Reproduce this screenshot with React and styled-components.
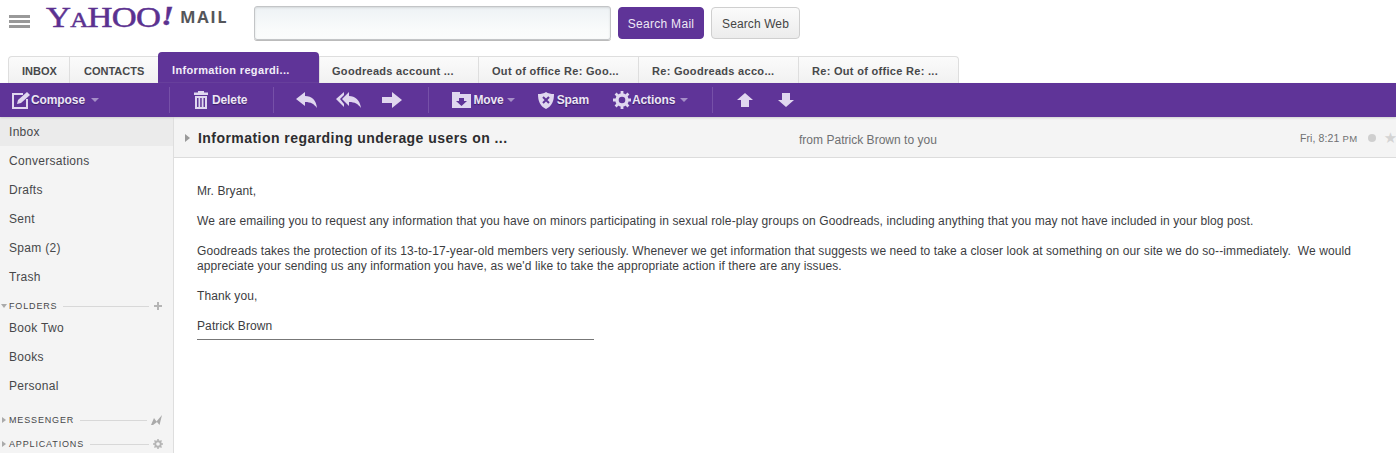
import React from "react";
import styled, { createGlobalStyle } from "styled-components";

const Global = createGlobalStyle`
  html, body { margin: 0; padding: 0; background: #fff; height: 100%; overflow: hidden; }
  body { font-family: "Liberation Sans", Arial, sans-serif; color: #333; }
  * { box-sizing: border-box; }
`;
const Page = styled.div`
  width: 1396px; height: 453px; overflow: hidden; display: flex; flex-direction: column;
`;
const Header = styled.header`
  height: 52px; flex: none; display: flex; align-items: flex-start; position: relative;
`;
const Burger = styled.div`
  width: 21px; margin: 15px 0 0 9px; flex: none; display: flex; flex-direction: column; gap: 2px;
  & > i { display: block; height: 3px; background: #999; }
`;
const Logo = styled.div`
  margin: 1px 0 0 16px; width: 128px; flex: none; display: flex; align-items: baseline; height: 32px;
  font-family: "Liberation Serif", serif; color: #5b3190; line-height: 32px; font-size: 29px;
  white-space: nowrap; letter-spacing: -.6px; transform: scaleX(1.19); transform-origin: left;
  -webkit-text-stroke: .5px #5b3190;
`;
const LogoSmall = styled.span` font-size: 21px; `;
const LogoBang = styled.span` font-weight: 700; font-style: italic; font-size: 27px; margin-left: 1px; position: relative; top: -2px;`;
const MailWord = styled.div`
  margin: 8px 0 0 6px; width: 49px; flex: none; font: 700 16.5px/18px "Open Sans", "Liberation Sans", sans-serif; color: #55565a; letter-spacing: 1.6px;
`;
const SearchInput = styled.div`
  margin: 6px 0 0 25px; width: 357px; height: 34px; flex: none; border: 1px solid #c3c5c7; border-radius: 3px;
  background: linear-gradient(#eef2f5, #f9fbfb 70%, #fbfcfc); box-shadow: inset 0 1px 2px #d4d8da, 0 1px 0 #bbb;
`;
const HeadButton = styled.button`
  margin: 7px 0 0 ${p => p.$gap}px; width: ${p => p.$w}px; height: 32px; flex: none; border-radius: 4px;
  font: 12px "Liberation Sans", sans-serif; letter-spacing: ${p => p.$primary ? ".3px" : ".1px"}; padding: 2px 0 0;
  color: ${p => p.$primary ? "#eee8f5" : "#444"};
  background: ${p => p.$primary ? "#5f3498" : "linear-gradient(#fbfbfb, #ececec)"};
  border: 1px solid ${p => p.$primary ? "#5f3498" : "#cfcfcf"};
`;
const TabRow = styled.nav`
  height: 31px; flex: none; display: flex; align-items: flex-end; padding-left: 8px;
`;
const Tab = styled.div`
  height: 27px; width: ${p => p.$w}px; flex: none; padding-left: ${p => p.$pad}px; white-space: nowrap;
  font: 700 11px/29px "Liberation Sans", sans-serif; letter-spacing: ${p => p.$caps ? "0" : ".3px"}; color: #47484a;
  border: 1px solid #dedede; border-width: 1px 0 0 1px;
  background: linear-gradient(#fbfbfb, #f1f1f1);
  ${p => p.$first && "border-top-left-radius: 4px;"}
  ${p => p.$last && "border-top-right-radius: 4px; border-right: 1px solid #dedede;"}
`;
const ActiveTab = styled.div`
  height: 31px; width: 161px; flex: none; padding-left: 14px; white-space: nowrap; border-radius: 4px 4px 0 0;
  font: 700 11px/37px "Liberation Sans", sans-serif; letter-spacing: .35px; color: #f2edf8; background: #5f3498;
`;
const Toolbar = styled.div`
  height: 34px; flex: none; background: #5f3498; display: flex; align-items: center; color: #ece6f5;
  box-shadow: 0 1px 2px #cfcfcf; position: relative; z-index: 1;
`;
const Tool = styled.div`
  display: flex; align-items: center; flex: none; margin-left: ${p => p.$ml}px; gap: ${p => p.$gap ?? 0}px;
  font: 700 12px/34px "Liberation Sans", sans-serif; letter-spacing: -.1px; text-shadow: 0 1px 1px #3a1d66; white-space: nowrap;
  & svg { display: block; flex: none; }
`;
const Sep = styled.div`
  width: 1px; height: 26px; flex: none; background: #7650a8; margin-left: ${p => p.$ml}px;
`;
const Caret = styled.span`
  width: 0; height: 0; border: 4px solid transparent; border-top-color: #a68fc8; border-bottom: 0; margin-left: ${p => p.$ml}px;
`;
const Body = styled.div`
  flex: 1; display: flex; min-height: 0;
`;
const Side = styled.aside`
  width: 174px; flex: none; background: #f4f4f4; border-right: 1px solid #dedede; display: flex; flex-direction: column; overflow: hidden;
`;
const NavItem = styled.div`
  height: 29px; flex: none; padding-left: 9px; font: 12px/30px "Liberation Sans", sans-serif; letter-spacing: .3px; color: #47484a;
  background: ${p => p.$active ? "#ebebeb" : "transparent"};
`;
const SectionHead = styled.div`
  height: 16px; flex: none; display: flex; align-items: center; padding: ${p => p.$pt || 0}px 10px 0 1px; margin-top: ${p => p.$mt || 0}px;
  font: 9px "Liberation Sans", sans-serif; letter-spacing: .85px; color: #47484a;
  & svg { flex: none; }
`;
const Rule = styled.div` flex: 1; height: 1px; background: #d8d8d8; margin: 0 4px 0 6px; `;
const Arrow = styled.span`
  width: 0; height: 0; flex: none; margin-right: 3px;
  ${p => p.$open
    ? "border-left: 3.5px solid transparent; border-right: 3.5px solid transparent; border-top: 4px solid #aaa; margin-right:2px;"
    : "border-top: 3.5px solid transparent; border-bottom: 3.5px solid transparent; border-left: 4px solid #aaa; margin-left: 1px;"}
`;
const Main = styled.main`
  flex: 1; min-width: 0; display: flex; flex-direction: column; overflow: hidden;
`;
const MsgHead = styled.div`
  height: 41px; flex: none; background: #f4f4f4; border-bottom: 1px solid #dcdcdc; display: flex; align-items: center; padding: 2px 0 0 11px;
`;
const Tri = styled.span`
  width: 0; height: 0; flex: none; border-top: 4px solid transparent; border-bottom: 4px solid transparent; border-left: 5px solid #999;
`;
const Subject = styled.div`
  margin-left: 8px; width: 601px; flex: none; font: 700 14px "Liberation Sans", sans-serif; letter-spacing: .45px; color: #2d2d2f; white-space: nowrap;
`;
const From = styled.div`
  width: 501px; flex: none; padding-top: 3px; font: 12px "Liberation Sans", sans-serif; color: #6f7072; white-space: nowrap; letter-spacing: .02px;
`;
const Time = styled.div`
  font: 10.5px "Liberation Sans", sans-serif; color: #6f7072; white-space: nowrap; letter-spacing: .1px;
`;
const Meridian = styled.span` font-size: 9.5px; letter-spacing: .5px; `;
const Dot = styled.span`
  width: 8px; height: 8px; border-radius: 50%; background: #cfcfcf; flex: none; margin-left: 10px;
`;
const Star = styled.span`
  font: 15px "DejaVu Sans", sans-serif; color: #d4d4d4; margin-left: 8px; flex: none;
`;
const Content = styled.div`
  padding: 26px 24px 0 23px; font: 12px/15px "Liberation Sans", sans-serif; letter-spacing: .1px; color: #3c3d3f;
`;
const Para = styled.p` margin: 0 0 15px; `;
const Signature = styled.div`
  width: 397px; padding-bottom: 5px; border-bottom: 1px solid #777;
`;

const W = "#e0d7ef";
const Compose = () => (
  <svg width="20" height="20" viewBox="0 0 20 20"><path d="M1 3h11v2H3v12h12V9h2v10H1z" fill={W}/><path d="M6 14l1-4 9-8 3 3-9 8z" fill={W}/></svg>
);
const Trash = () => (
  <svg width="14" height="18" viewBox="0 0 14 18" fill={W}><path d="M4 0h6v1.500h4V4H0V1.500h4z"/><path d="M1 5h12v13H1zM3 7v9h1.500V7zm3.200 0v9h1.500V7zm3.300 0v9H11V7z" fillRule="evenodd"/></svg>
);
const Reply = () => (
  <svg width="21" height="16" viewBox="0 0 21 16" fill={W}><path d="M0 7L9 0v4c7 0 11 4 12 12-3-4-6-6-12-6v4z"/></svg>
);
const ReplyAll = () => (
  <svg width="25" height="16" viewBox="0 0 25 16" fill={W}><path d="M0 7l8-7v3L4 7l4 5v3z"/><path d="M6 7l7-7v4c6 0 11 4 12 12-3-4-6-6-12-6v4z"/></svg>
);
const Forward = () => (
  <svg width="20" height="16" viewBox="0 0 20 16" fill={W}><path d="M0 5h10V0l10 8-10 8v-5H0z"/></svg>
);
const Move = () => (
  <svg width="19" height="16" viewBox="0 0 19 16" fill={W}><path d="M0 0h8v2h11v14H0zM7 6v3H4l5.500 5L15 9h-3V6z" fillRule="evenodd"/></svg>
);
const Shield = () => (
  <svg width="16" height="17" viewBox="0 0 16 17"><path d="M8 0c2 1.500 5 2 8 2 0 7-2 12-8 15C2 14 0 9 0 2c3 0 6-.5 8-2z" fill={W}/><path d="M5 5l6 6M11 5l-6 6" stroke="#5f3498" strokeWidth="2"/></svg>
);
const Gear = ({ size = 18, color = W }) => (
  <svg width={size} height={size} viewBox="0 0 18 18" fill="none">
    <circle cx="9" cy="9" r="5" stroke={color} strokeWidth="3.400"/>
    <path d="M9 0v4M9 14v4M0 9h4M14 9h4M2.600 2.600l2.800 2.800M12.600 12.600l2.800 2.800M15.400 2.600l-2.800 2.800M5.400 12.600l-2.800 2.800" stroke={color} strokeWidth="2.800"/>
  </svg>
);
const Up = () => (
  <svg width="16" height="14" viewBox="0 0 16 14" fill={W}><path d="M8 0l8 7h-4v7H4V7H0z"/></svg>
);
const Down = () => (
  <svg width="16" height="14" viewBox="0 0 16 14" fill={W}><path d="M8 14L0 7h4V0h8v7h4z"/></svg>
);

export default function App() {
  return (
    <Page>
      <Global />
      <Header>
        <Burger><i /><i /><i /></Burger>
        <Logo>Y<LogoSmall>A</LogoSmall>HOO<LogoBang>!</LogoBang></Logo>
        <MailWord>MAIL</MailWord>
        <SearchInput />
        <HeadButton $primary $gap={7} $w={86}>Search Mail</HeadButton>
        <HeadButton $gap={7} $w={89}>Search Web</HeadButton>
      </Header>
      <TabRow>
        <Tab $first $caps $w={61} $pad={13}>INBOX</Tab>
        <Tab $caps $w={89} $pad={14}>CONTACTS</Tab>
        <ActiveTab>Information regardi...</ActiveTab>
        <Tab $w={159} $pad={12}>Goodreads account ...</Tab>
        <Tab $w={160} $pad={13}>Out of office Re: Goo...</Tab>
        <Tab $w={160} $pad={13}>Re: Goodreads acco...</Tab>
        <Tab $last $w={161} $pad={13}>Re: Out of office Re: ...</Tab>
      </TabRow>
      <Toolbar>
        <Tool $ml={11}><Compose />Compose<Caret $ml={6} /></Tool>
        <Sep $ml={70} />
        <Tool $ml={24} $gap={4}><Trash />Delete</Tool>
        <Sep $ml={26} />
        <Tool $ml={22}><Reply /></Tool>
        <Tool $ml={19}><ReplyAll /></Tool>
        <Tool $ml={21}><Forward /></Tool>
        <Sep $ml={26} />
        <Tool $ml={23} $gap={2}><Move />Move<Caret $ml={1} /></Tool>
        <Tool $ml={23} $gap={3}><Shield />Spam</Tool>
        <Tool $ml={24} $gap={1}><Gear />Actions<Caret $ml={4} /></Tool>
        <Sep $ml={24} />
        <Tool $ml={24}><Up /></Tool>
        <Tool $ml={25}><Down /></Tool>
      </Toolbar>
      <Body>
        <Side>
          <NavItem $active>Inbox</NavItem>
          <NavItem>Conversations</NavItem>
          <NavItem>Drafts</NavItem>
          <NavItem>Sent</NavItem>
          <NavItem>Spam (2)</NavItem>
          <NavItem>Trash</NavItem>
          <SectionHead $mt={6} $pt={2}>
            <Arrow $open />FOLDERS<Rule />
            <svg width="10" height="10" viewBox="0 0 10 10"><path d="M5 1v8M1 5h8" stroke="#b5b5b5" strokeWidth="2"/></svg>
          </SectionHead>
          <NavItem>Book Two</NavItem>
          <NavItem>Books</NavItem>
          <NavItem>Personal</NavItem>
          <SectionHead $mt={12}>
            <Arrow />MESSENGER<Rule />
            <svg width="12" height="10" viewBox="0 0 12 10"><path d="M0 10l3-7 2.500 3.500L11 0 8.500 10 6 7 2 10z" fill="#aaa"/></svg>
          </SectionHead>
          <SectionHead $mt={8}>
            <Arrow />APPLICATIONS<Rule />
            <Gear size={10} color="#b5b5b5" />
          </SectionHead>
        </Side>
        <Main>
          <MsgHead>
            <Tri />
            <Subject>Information regarding underage users on ...</Subject>
            <From>from Patrick Brown to you</From>
            <Time>Fri, 8:21 <Meridian>PM</Meridian></Time>
            <Dot />
            <Star>★</Star>
          </MsgHead>
          <Content>
            <Para>Mr. Bryant,</Para>
            <Para>We are emailing you to request any information that you have on minors participating in sexual role-play groups on Goodreads, including anything that you may not have included in your blog post.</Para>
            <Para>Goodreads takes the protection of its 13-to-17-year-old members very seriously. Whenever we get information that suggests we need to take a closer look at something on our site we do so--immediately.&nbsp; We would appreciate your sending us any information you have, as we'd like to take the appropriate action if there are any issues.</Para>
            <Para>Thank you,</Para>
            <Signature>Patrick Brown</Signature>
          </Content>
        </Main>
      </Body>
    </Page>
  );
}
